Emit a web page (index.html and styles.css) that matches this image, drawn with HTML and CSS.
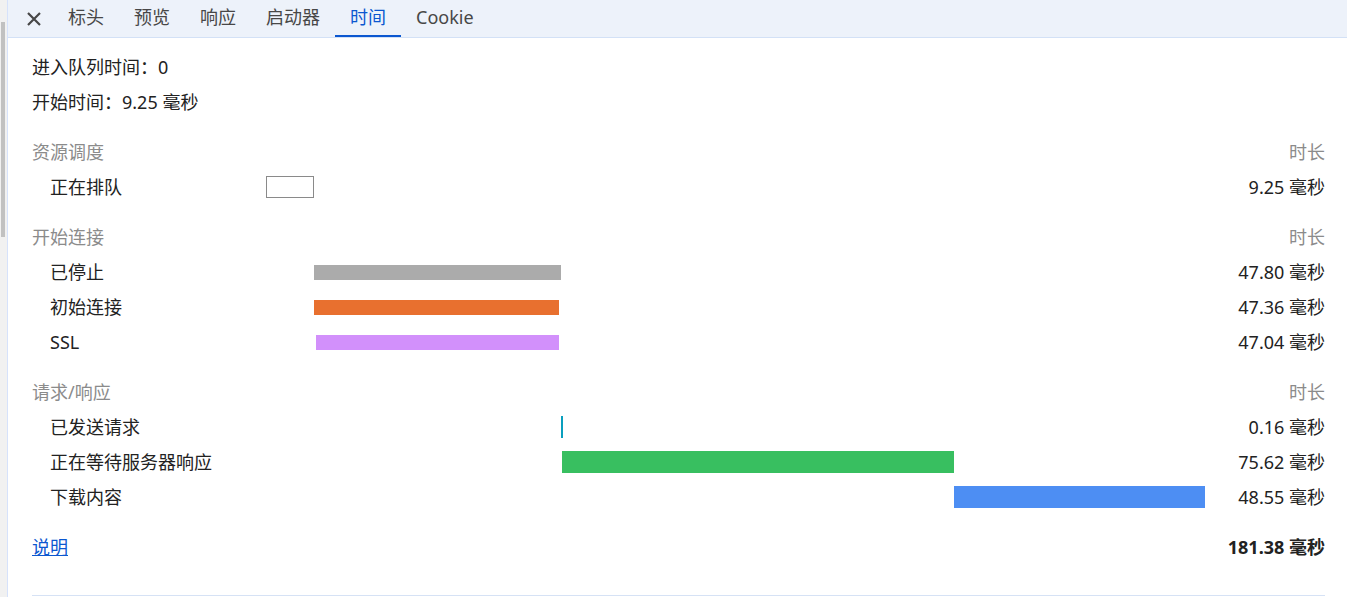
FILE: index.html
```html
<!DOCTYPE html>
<html lang="zh-CN">
<head>
<meta charset="utf-8">
<title>时间</title>
<link rel="stylesheet" href="styles.css">
</head>
<body>
<div class="side">
  <div class="thumb"></div>
</div>
<div class="panel">
  <div class="tabbar">
    <div class="close">
      <svg width="14" height="14" viewBox="0 0 14 14"><path d="M1 1L13 13M13 1L1 13" stroke="#474747" stroke-width="2.2" fill="none"/></svg>
    </div>
    <div class="tab">标头</div>
    <div class="tab">预览</div>
    <div class="tab">响应</div>
    <div class="tab">启动器</div>
    <div class="tab active">时间</div>
    <div class="tab">Cookie</div>
  </div>
  <div class="content">
    <div class="info">进入队列时间：0</div>
    <div class="info">开始时间：9.25 毫秒</div>

    <div class="section">
      <div class="row head"><span class="label">资源调度</span><span></span><span class="value">时长</span></div>
      <div class="row"><span class="label sub">正在排队</span><span class="track"><span class="bar queue" style="margin-left:0%;width:5.106%"></span></span><span class="value">9.25 毫秒</span></div>
    </div>

    <div class="section">
      <div class="row head"><span class="label">开始连接</span><span></span><span class="value">时长</span></div>
      <div class="row"><span class="label sub">已停止</span><span class="track"><span class="bar thin stalled" style="margin-left:5.106%;width:26.277%"></span></span><span class="value">47.80 毫秒</span></div>
      <div class="row"><span class="label sub">初始连接</span><span class="track"><span class="bar thin connect" style="margin-left:5.106%;width:26.064%"></span></span><span class="value">47.36 毫秒</span></div>
      <div class="row"><span class="label sub">SSL</span><span class="track"><span class="bar thin ssl" style="margin-left:5.319%;width:25.851%"></span></span><span class="value">47.04 毫秒</span></div>
    </div>

    <div class="section">
      <div class="row head"><span class="label">请求/响应</span><span></span><span class="value">时长</span></div>
      <div class="row"><span class="label sub">已发送请求</span><span class="track"><span class="bar sent" style="margin-left:31.383%;width:2px"></span></span><span class="value">0.16 毫秒</span></div>
      <div class="row"><span class="label sub">正在等待服务器响应</span><span class="track"><span class="bar waiting" style="margin-left:31.489%;width:41.702%"></span></span><span class="value">75.62 毫秒</span></div>
      <div class="row"><span class="label sub">下载内容</span><span class="track"><span class="bar download" style="margin-left:73.191%;width:26.702%"></span></span><span class="value">48.55 毫秒</span></div>
    </div>

    <div class="section">
      <div class="row total"><a class="link" href="#">说明</a><span></span><span class="value strong">181.38 毫秒</span></div>
    </div>

    <div class="divider"></div>
  </div>
</div>
</body>
</html>
```

FILE: styles.css
```css
html, body {
  margin: 0;
  padding: 0;
  height: 100%;
  background: #ffffff;
}
body {
  display: flex;
  overflow: hidden;
  font-family: "Noto Sans", "Noto Sans CJK SC", sans-serif;
  font-size: 18px;
  line-height: 1.2;
  color: #222222;
}
.side {
  width: 7px;
  flex: none;
  background: #f1f1f1;
  border-right: 1px solid #d6e2fb;
}
.thumb {
  margin: 22px 0 0 1px;
  width: 4px;
  height: 215px;
  background: #c1c1c1;
}
.panel {
  flex: 1;
  min-width: 0;
  display: flex;
  flex-direction: column;
}
.tabbar {
  height: 37px;
  flex: none;
  display: flex;
  align-items: stretch;
  background: #edf2fa;
  border-bottom: 1px solid #d3e1f6;
}
.close {
  display: flex;
  align-items: center;
  padding: 0 12px 0 19px;
}
.close svg {
  display: block;
}
.tab {
  display: flex;
  align-items: center;
  padding: 0 15px 2px;
  color: #474747;
  white-space: nowrap;
}
.tab.active {
  color: #0b57d0;
  box-shadow: inset 0 -2px 0 #0b57d0;
}
.content {
  padding: 12px 22px 0 24px;
}
.info {
  height: 35px;
  display: flex;
  align-items: center;
}
.section {
  margin-top: 15px;
}
.row {
  display: grid;
  grid-template-columns: 234px 1fr 119px;
  height: 35px;
  align-items: center;
}
.label {
  white-space: nowrap;
}
.label.sub {
  padding-left: 18px;
}
.head {
  color: #8b8b8b;
}
.value {
  text-align: right;
  white-space: nowrap;
}
.strong {
  font-weight: 700;
}
.track {
  display: flex;
  align-items: flex-start;
  align-self: stretch;
}
.bar {
  display: block;
  height: 22px;
  margin-top: 6px;
  box-sizing: border-box;
}
.bar.thin {
  height: 15px;
  margin-top: 10px;
}
.queue {
  background: #ffffff;
  border: 1px solid #8a8a8a;
}
.stalled {
  background: #ababab;
}
.connect {
  background: #e8702f;
}
.ssl {
  background: #d290fb;
}
.sent {
  background: #0a9fbe;
}
.waiting {
  background: #38bf60;
}
.download {
  background: #4d8ef3;
}
.link {
  color: #0b57d0;
  text-decoration: underline;
}
.divider {
  margin-top: 30px;
  height: 1px;
  background: #d6e2f5;
}
```
